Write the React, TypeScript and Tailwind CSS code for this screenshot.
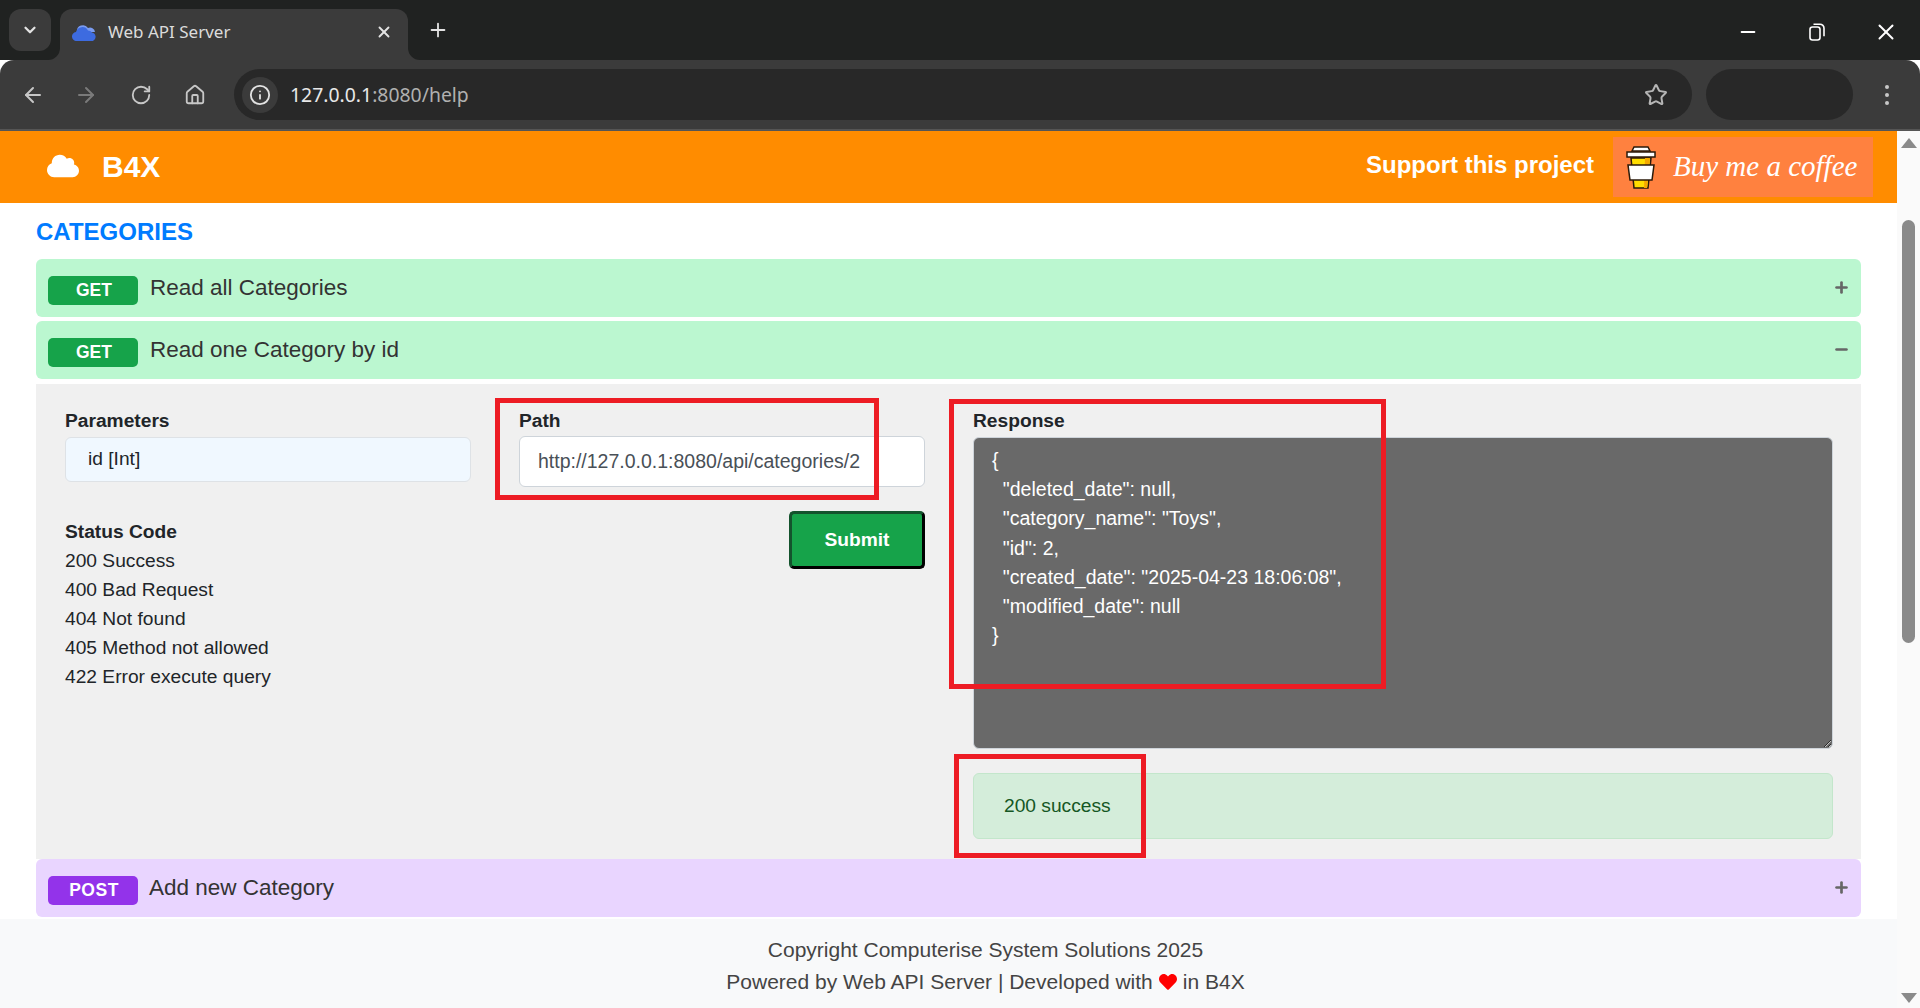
import React from 'react';
import { ArrowLeft, ArrowRight, ChevronDown, Home, Info, Minus, Plus, RotateCw, Star, X } from 'lucide-react';
import { FaCloud, FaHeart } from 'react-icons/fa';

const responseText = `{
  "deleted_date": null,
  "category_name": "Toys",
  "id": 2,
  "created_date": "2025-04-23 18:06:08",
  "modified_date": null
}`;

const statusCodes = ['200 Success', '400 Bad Request', '404 Not found', '405 Method not allowed', '422 Error execute query'];

const Favicon = () => (
  <svg width="25" height="17" viewBox="0 0 25 17" className="shrink-0">
    <path d="M5 8a6 6 0 0 1 11-4 5 5 0 0 1 7 4z" fill="#7b9cf0" />
    <path d="M5 17a4.5 4.5 0 0 1-1-9 6.5 6.5 0 0 1 12-1.500 5 5 0 0 1 4 2 4.500 4.500 0 0 1 1 8.500z" fill="#3d6be0" />
  </svg>
);

const CoffeeCup = () => (
  <svg width="30" height="43" viewBox="0 0 30 43" className="shrink-0">
    <path d="M5 12h20l-3 30H8z" fill="#ffdd00" stroke="#2b1a0a" strokeWidth="1.500" />
    <path d="M19 12h5l-3 30h-3z" fill="#f5a800" />
    <path d="M2 19h26l-2 15H4z" fill="#fff" stroke="#2b1a0a" strokeWidth="1.500" />
    <path d="M6 5l2-4h14l2 4z" fill="#fff" stroke="#2b1a0a" strokeWidth="1.500" />
    <rect x="1" y="6" width="28" height="5" fill="#fff" stroke="#2b1a0a" strokeWidth="1.500" />
  </svg>
);

const RestoreIcon = () => (
  <svg width="16" height="18" viewBox="0 0 16 18" fill="none" stroke="#fff" strokeWidth="1.600">
    <rect x="1" y="4" width="10" height="13" rx="2.500" />
    <path d="M4.500 1.200h6.500a4 4 0 0 1 4 4v8" />
  </svg>
);

const TabCorner = ({ flip }: { flip?: boolean }) => (
  <svg
    width="12"
    height="12"
    viewBox="0 0 12 12"
    className={flip ? 'absolute bottom-0 left-full -scale-x-100' : 'absolute bottom-0 right-full'}
  >
    <path d="M12 0v12H0a12 12 0 0 0 12-12z" fill="#3b3b3b" />
  </svg>
);

const EndpointRow = ({
  method,
  title,
  open,
  rowClass,
  badgeClass,
  titleClass,
}: {
  method: string;
  title: string;
  open?: boolean;
  rowClass: string;
  badgeClass: string;
  titleClass: string;
}) => (
  <div className={`flex h-[58px] shrink-0 items-center rounded-[6px] pl-3 pr-[11px] ${rowClass}`}>
    <span
      className={`mt-[5px] flex h-[29px] w-[90px] shrink-0 items-center justify-center rounded-[5px] pl-[2px] text-[17.500px] font-bold text-white ${badgeClass}`}
    >
      {method}
    </span>
    <span className={`text-[22.500px] leading-none text-[#333] ${titleClass}`}>{title}</span>
    <span className="ml-auto mb-[1px] text-[#666]">
      {open ? <Minus size={17} strokeWidth={3.800} /> : <Plus size={17} strokeWidth={3.800} />}
    </span>
  </div>
);

const App = () => {
  return (
    <div className="relative flex h-[1008px] flex-col overflow-hidden bg-white font-['Liberation_Sans',Arial,sans-serif] text-[#212529]">
      {/* browser tab strip */}
      <div className="flex h-[60px] shrink-0 items-start bg-[#202221] font-['Noto_Sans',sans-serif]">
        <div className="ml-[9px] mt-[9px] flex h-[42px] w-[42px] items-center justify-center rounded-[12px] bg-[#3b3b3b] text-[#e3e3e3]">
          <ChevronDown size={18} strokeWidth={3} />
        </div>
        <div className="relative ml-[9px] mt-[9px] flex h-[51px] w-[348px] items-center rounded-t-[12px] bg-[#3b3b3b] pb-[5px] pl-[12px] pr-[15px] text-[#dcdcdc]">
          <TabCorner />
          <TabCorner flip />
          <Favicon />
          <span className="ml-[11px] text-[17px]">Web API Server</span>
          <X size={18} strokeWidth={2.500} className="ml-auto text-[#e3e3e3]" />
        </div>
        <Plus size={22} strokeWidth={2} className="ml-[19px] mt-[19px] text-[#e3e3e3]" />
        <div className="ml-auto mt-[19px] flex items-center text-white">
          <Minus size={22} strokeWidth={2} className="mr-[50px]" />
          <div className="mr-[48px]">
            <RestoreIcon />
          </div>
          <X size={26} strokeWidth={1.800} className="mr-[21px]" />
        </div>
      </div>

      {/* browser toolbar */}
      <div className="relative flex h-[71px] shrink-0 items-center rounded-t-[14px] border-b-2 border-[#555] bg-[#3b3b3b] text-[#c7c7c7]">
        <ArrowLeft size={24} strokeWidth={2} className="ml-[21px]" />
        <ArrowRight size={24} strokeWidth={2} className="ml-[29px] text-[#7a7a7a]" />
        <RotateCw size={22} strokeWidth={2} className="ml-[32px]" />
        <Home size={22} strokeWidth={2} className="ml-[32px]" />
        <div className="ml-[28px] flex h-[51px] w-[1458px] items-center rounded-full bg-[#282828] pl-[8px] pr-[24px] font-['Noto_Sans',sans-serif]">
          <div className="flex h-[36px] w-[36px] items-center justify-center rounded-full bg-[#3b3b3b] text-[#e3e3e3]">
            <Info size={22} strokeWidth={2} />
          </div>
          <span className="ml-[12px] text-[19.400px] text-[#e8e8e8]">
            127.0.0.1<span className="text-[#b0b0b0]">:8080/help</span>
          </span>
          <Star size={24} strokeWidth={2} className="ml-auto text-[#b5b5b5]" />
        </div>
        <div className="ml-[14px] h-[51px] w-[147px] rounded-full bg-[#282828]" />
        <div className="ml-[32px] flex flex-col gap-[4px]">
          <span className="h-[4px] w-[4px] rounded-full bg-[#c7c7c7]" />
          <span className="h-[4px] w-[4px] rounded-full bg-[#c7c7c7]" />
          <span className="h-[4px] w-[4px] rounded-full bg-[#c7c7c7]" />
        </div>
      </div>

      {/* page */}
      <div className="flex min-h-0 flex-1">
        <div className="flex min-w-0 flex-1 flex-col">
          <header className="flex h-[72px] shrink-0 items-center bg-[#ff8c00] pl-[47px] pr-[24px] text-white">
            <FaCloud size={32} className="mb-[2px]" />
            <span className="ml-[23px] mb-[2px] text-[30px] font-bold">B4X</span>
            <span className="ml-auto mr-[19px] mb-[5px] text-[24px] font-bold">Support this project</span>
            <div className="flex h-[60px] w-[260px] items-center bg-[#ff813f] pl-[13px]">
              <CoffeeCup />
              <span className="ml-[17px] whitespace-nowrap font-['Liberation_Serif',serif] text-[29px] italic">Buy me a coffee</span>
            </div>
          </header>

          <main className="flex min-h-0 flex-1 flex-col overflow-hidden px-[36px]">
            <h2 className="mt-[14px] mb-[13px] text-[24px] font-bold leading-[29px] text-[#007bff]">CATEGORIES</h2>
            <div className="flex flex-col gap-[4px]">
              <EndpointRow method="GET" title="Read all Categories" rowClass="bg-[#bbf7d0]" badgeClass="bg-[#16a34a]" titleClass="ml-[12px]" />
              <EndpointRow method="GET" title="Read one Category by id" open rowClass="bg-[#bbf7d0]" badgeClass="bg-[#16a34a]" titleClass="ml-[12px]" />
            </div>

            <div className="mt-[5px] flex h-[475px] shrink-0 gap-[48px] bg-[#f0f0f0] pl-[29px] pr-[28px] pt-[25px] text-[19.200px]">
              <div className="w-[406px] shrink-0">
                <div className="font-bold leading-[24px]">Parameters</div>
                <div className="mt-[4px] flex h-[45px] items-center rounded-[6px] border border-[#dee2e6] bg-[#f0f8ff] pl-[22px] pb-[1px]">id [Int]</div>
                <div className="mt-[38px] font-bold leading-[24px]">Status Code</div>
                <ul className="mt-[2px]">
                  {statusCodes.map((code) => (
                    <li key={code} className="leading-[29px]">
                      {code}
                    </li>
                  ))}
                </ul>
              </div>

              <div className="flex w-[406px] shrink-0 flex-col">
                <div className="font-bold leading-[24px]">Path</div>
                <input
                  readOnly
                  value="http://127.0.0.1:8080/api/categories/2"
                  className="mt-[3px] h-[51px] w-full rounded-[6px] border border-[#ced4da] bg-white pb-[1px] pl-[18px] text-[19.500px] text-[#495057] outline-none"
                />
                <button className="mt-[24px] h-[58px] w-[136px] self-end rounded-[5px] border-[3px] border-b-black border-l-[#14532d] border-r-black border-t-[#14532d] bg-[#16a34a] font-bold text-white">
                  Submit
                </button>
              </div>

              <div className="flex min-w-0 flex-1 flex-col">
                <div className="font-bold leading-[24px]">Response</div>
                <textarea
                  readOnly
                  value={responseText}
                  className="mt-[4px] block h-[312px] w-full rounded-[6px] border border-[#ced4da] bg-[#696969] pl-[18px] pt-[8px] text-[19.500px] leading-[29.200px] text-white outline-none"
                />
                <div className="mt-[24px] flex h-[66px] items-center rounded-[6px] border border-[#c3e6cb] bg-[#d4edda] pl-[30px] text-[#155724]">
                  200 success
                </div>
              </div>
            </div>

            <EndpointRow method="POST" title="Add new Category" rowClass="bg-[#e9d5ff]" badgeClass="bg-[#9333ea] tracking-[0.500px]" titleClass="ml-[11px]" />
          </main>

          <footer className="flex h-[89px] shrink-0 flex-col items-center bg-[#f8f9fa] pl-[74px] pt-[15px] text-[21px] leading-[32px] text-[#444]">
            <div>Copyright Computerise System Solutions 2025</div>
            <div className="flex items-center">
              Powered by Web API Server | Developed with
              <FaHeart size={18} className="mx-[6px] text-[#ff0000]" />
              in B4X
            </div>
          </footer>
        </div>

        {/* page scrollbar */}
        <div className="flex w-[23px] shrink-0 flex-col items-center bg-[#fafafa] pb-[5px] pt-[7px]">
          <div className="h-0 w-0 border-x-[8px] border-b-[10px] border-x-transparent border-b-[#8a8a8a]" />
          <div className="mt-[72px] h-[423px] w-[13px] rounded-full bg-[#8a8a8a]" />
          <div className="mt-auto h-0 w-0 border-x-[8px] border-t-[10px] border-x-transparent border-t-[#8a8a8a]" />
        </div>
      </div>

      {/* red annotation boxes drawn over the screenshot */}
      <div className="absolute left-[495px] top-[398px] h-[102px] w-[384px] border-[5px] border-[#ed1c24]" />
      <div className="absolute left-[949px] top-[399px] h-[290px] w-[437px] border-[5px] border-[#ed1c24]" />
      <div className="absolute left-[954px] top-[754px] h-[104px] w-[192px] border-[5px] border-[#ed1c24]" />
    </div>
  );
};

export default App;
